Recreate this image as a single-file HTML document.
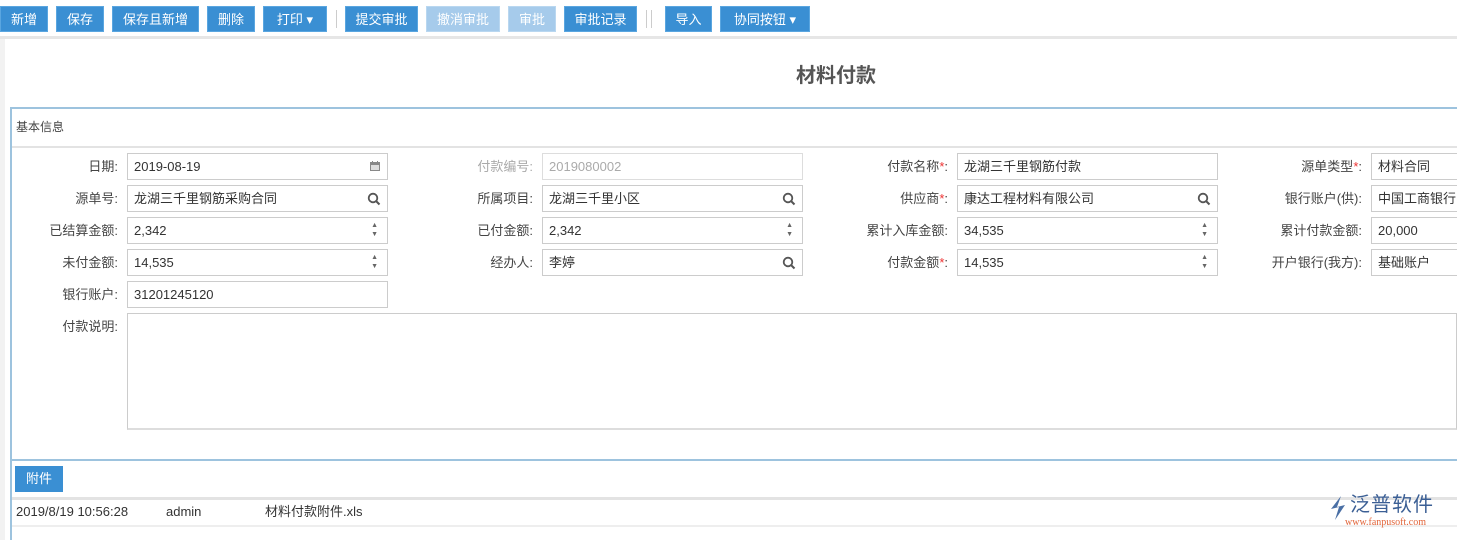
<!DOCTYPE html>
<html><head><meta charset="utf-8"><style>
*{box-sizing:border-box;margin:0;padding:0}
body{width:1457px;height:540px;overflow:hidden;background:#fff;font-family:"Liberation Sans","Noto Sans CJK SC",sans-serif;font-size:13px;color:#333;position:relative}
.a{position:absolute}
.btn{position:absolute;top:6px;height:26px;background:#3a8fd3;color:#fff;font-size:13px;line-height:26px;text-align:center;border:1px solid #5aa6e0}
.dis{background:#a6cbeb;border-color:#b9d7f0}
.sep{position:absolute;top:10px;width:1px;height:18px;background:#ccc}
.lb{position:absolute;width:110px;text-align:right;line-height:27px;font-size:13px;color:#444}
.in{position:absolute;width:261px;height:27px;border:1px solid #ccc;line-height:25px;padding-left:6px;font-size:13px;color:#333;background:#fff}
.st{color:#e33}
.ic{position:absolute;right:6px;top:6px}
.sp{position:absolute;right:9px;top:3px;font-size:7px;line-height:9px;color:#666}
</style></head><body>
<div class="btn" style="left:0;width:48px">新增</div>
<div class="btn" style="left:56px;width:48px">保存</div>
<div class="btn" style="left:112px;width:87px">保存且新增</div>
<div class="btn" style="left:207px;width:48px">删除</div>
<div class="btn" style="left:263px;width:64px">打印 ▾</div>
<div class="sep" style="left:336px"></div>
<div class="btn" style="left:345px;width:73px">提交审批</div>
<div class="btn dis" style="left:426px;width:74px">撤消审批</div>
<div class="btn dis" style="left:508px;width:48px">审批</div>
<div class="btn" style="left:564px;width:73px">审批记录</div>
<div class="sep" style="left:646px"></div><div class="sep" style="left:651px"></div>
<div class="btn" style="left:665px;width:47px">导入</div>
<div class="btn" style="left:720px;width:90px">协同按钮 ▾</div>
<div class="a" style="left:0;top:36px;width:1457px;height:3px;background:#e6e6e6"></div>
<div class="a" style="left:0;top:39px;width:5px;height:501px;background:#f2f2f2"></div>
<div class="a" style="left:0;top:62px;width:1457px;text-align:center;padding-left:215px;font-size:20px;font-weight:bold;color:#555;line-height:28px">材料付款</div>
<div class="a" style="left:10px;top:107px;width:1447px;height:433px;border-left:2px solid #9dc3de;border-top:2px solid #9dc3de"></div>
<div class="a" style="left:16px;top:118px;font-size:12px;color:#444">基本信息</div>
<div class="a" style="left:12px;top:146px;width:1445px;height:2px;background:#e3e3e3"></div>

<div class="lb" style="left:8px;top:153px">日期:</div>
<div class="in" style="left:127px;top:153px">2019-08-19<svg class="ic" width="12" height="12" viewBox="0 0 12 12"><rect x="1" y="2" width="10" height="9" fill="#888"/><rect x="2" y="5" width="8" height="5" fill="#ddd"/><rect x="3" y="1" width="1" height="2" fill="#888"/><rect x="8" y="1" width="1" height="2" fill="#888"/></svg></div>
<div class="lb" style="left:8px;top:185px">源单号:</div>
<div class="in" style="left:127px;top:185px">龙湖三千里钢筋采购合同<svg class="ic" width="14" height="14" viewBox="0 0 14 14"><circle cx="6" cy="6" r="4.3" fill="none" stroke="#555" stroke-width="1.8"/><line x1="9" y1="9" x2="12.5" y2="12.5" stroke="#555" stroke-width="2"/></svg></div>
<div class="lb" style="left:8px;top:217px">已结算金额:</div>
<div class="in" style="left:127px;top:217px">2,342<div class="sp">▲<br>▼</div></div>
<div class="lb" style="left:8px;top:249px">未付金额:</div>
<div class="in" style="left:127px;top:249px">14,535<div class="sp">▲<br>▼</div></div>
<div class="lb" style="left:8px;top:281px">银行账户:</div>
<div class="in" style="left:127px;top:281px">31201245120</div>
<div class="lb" style="left:8px;top:313px">付款说明:</div>
<div class="a" style="left:127px;top:313px;width:1330px;height:117px;border:1px solid #ccc;border-bottom:2px solid #ddd"></div>

<div class="lb" style="left:423px;top:153px;color:#aaa">付款编号:</div>
<div class="in" style="left:542px;top:153px;color:#aaa;border-color:#ddd">2019080002</div>
<div class="lb" style="left:423px;top:185px">所属项目:</div>
<div class="in" style="left:542px;top:185px">龙湖三千里小区<svg class="ic" width="14" height="14" viewBox="0 0 14 14"><circle cx="6" cy="6" r="4.3" fill="none" stroke="#555" stroke-width="1.8"/><line x1="9" y1="9" x2="12.5" y2="12.5" stroke="#555" stroke-width="2"/></svg></div>
<div class="lb" style="left:423px;top:217px">已付金额:</div>
<div class="in" style="left:542px;top:217px">2,342<div class="sp">▲<br>▼</div></div>
<div class="lb" style="left:423px;top:249px">经办人:</div>
<div class="in" style="left:542px;top:249px">李婷<svg class="ic" width="14" height="14" viewBox="0 0 14 14"><circle cx="6" cy="6" r="4.3" fill="none" stroke="#555" stroke-width="1.8"/><line x1="9" y1="9" x2="12.5" y2="12.5" stroke="#555" stroke-width="2"/></svg></div>

<div class="lb" style="left:838px;top:153px">付款名称<span class="st">*</span>:</div>
<div class="in" style="left:957px;top:153px">龙湖三千里钢筋付款</div>
<div class="lb" style="left:838px;top:185px">供应商<span class="st">*</span>:</div>
<div class="in" style="left:957px;top:185px">康达工程材料有限公司<svg class="ic" width="14" height="14" viewBox="0 0 14 14"><circle cx="6" cy="6" r="4.3" fill="none" stroke="#555" stroke-width="1.8"/><line x1="9" y1="9" x2="12.5" y2="12.5" stroke="#555" stroke-width="2"/></svg></div>
<div class="lb" style="left:828px;top:217px;width:120px">累计入库金额:</div>
<div class="in" style="left:957px;top:217px">34,535<div class="sp">▲<br>▼</div></div>
<div class="lb" style="left:838px;top:249px">付款金额<span class="st">*</span>:</div>
<div class="in" style="left:957px;top:249px">14,535<div class="sp">▲<br>▼</div></div>

<div class="lb" style="left:1232px;top:153px;width:130px">源单类型<span class="st">*</span>:</div>
<div class="in" style="left:1371px;top:153px;width:100px">材料合同</div>
<div class="lb" style="left:1232px;top:185px;width:130px">银行账户(供):</div>
<div class="in" style="left:1371px;top:185px;width:100px">中国工商银行</div>
<div class="lb" style="left:1232px;top:217px;width:130px">累计付款金额:</div>
<div class="in" style="left:1371px;top:217px;width:100px">20,000</div>
<div class="lb" style="left:1232px;top:249px;width:130px">开户银行(我方):</div>
<div class="in" style="left:1371px;top:249px;width:100px">基础账户</div>

<div class="a" style="left:12px;top:459px;width:1445px;height:2px;background:#9dc3de"></div>
<div class="a" style="left:15px;top:466px;width:48px;height:26px;background:#3a8fd3;color:#fff;text-align:center;line-height:26px">附件</div>
<div class="a" style="left:12px;top:497px;width:1445px;height:3px;background:#e3e3e3"></div>
<div class="a" style="left:16px;top:504px;line-height:16px;color:#333">2019/8/19 10:56:28</div>
<div class="a" style="left:166px;top:504px;line-height:16px">admin</div>
<div class="a" style="left:265px;top:504px;line-height:16px">材料付款附件.xls</div>
<div class="a" style="left:12px;top:525px;width:1445px;height:2px;background:#eee"></div>
<svg class="a" style="left:1327px;top:495px" width="22" height="26" viewBox="0 0 22 26"><path d="M14 1 L4 14 L12 12 L8 25 L18 10 L10 12 Z" fill="#4a6fa5"/></svg>
<div class="a" style="left:1350px;top:493px;font-size:20px;color:#3b5f95;line-height:24px;letter-spacing:1px">泛普软件</div>
<div class="a" style="left:1345px;top:517px;font-size:10px;color:#e2653a;font-family:'Liberation Serif',serif">www.fanpusoft.com</div>
</body></html>
